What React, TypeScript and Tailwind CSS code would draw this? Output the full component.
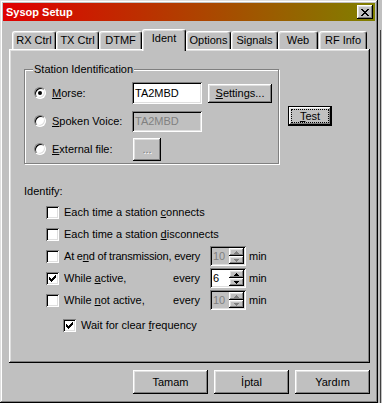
import type { ReactNode } from 'react';

const raised =
  'shadow-[inset_-1px_-1px_#000,inset_1px_1px_#fff,inset_-2px_-2px_#808080,inset_2px_2px_#dfdfdf]';
const sunken =
  'shadow-[inset_1px_1px_#808080,inset_-1px_-1px_#fff,inset_2px_2px_#000,inset_-2px_-2px_#dfdfdf]';

const tabs = [
  { label: 'RX Ctrl', w: 'w-[44px]' },
  { label: 'TX Ctrl', w: 'w-[43px]' },
  { label: 'DTMF', w: 'w-[43px]' },
  { label: 'Ident', w: 'w-[44px]', active: true },
  { label: 'Options', w: 'w-[45px]' },
  { label: 'Signals', w: 'w-[47px]' },
  { label: 'Web', w: 'w-[40px]' },
  { label: 'RF Info', w: 'w-[48px] ml-[1px]' },
];

function Btn({ children, className = '' }: { children: ReactNode; className?: string }) {
  return (
    <div className={`flex items-center justify-center bg-[#c0c0c0] ${raised} ${className}`}>{children}</div>
  );
}

function Radio({ on }: { on?: boolean }) {
  return (
    <div className="flex h-[12px] w-[12px] shrink-0 items-center justify-center rounded-full border border-t-[#808080] border-l-[#808080] border-r-white border-b-white bg-white shadow-[inset_1px_1px_#000,inset_-1px_-1px_#dfdfdf]">
      {on && <div className="h-[4px] w-[4px] rounded-full bg-black" />}
    </div>
  );
}

function Check({ on }: { on?: boolean }) {
  return (
    <div className={`flex h-[13px] w-[13px] shrink-0 items-center justify-center bg-white ${sunken}`}>
      {on && (
        <svg width="7" height="7" viewBox="0 0 7 7" shapeRendering="crispEdges">
          <rect x="6" y="0" width="1" height="1" />
          <rect x="5" y="1" width="2" height="1" />
          <rect x="0" y="2" width="1" height="1" />
          <rect x="4" y="2" width="3" height="1" />
          <rect x="0" y="3" width="2" height="1" />
          <rect x="3" y="3" width="3" height="1" />
          <rect x="0" y="4" width="5" height="1" />
          <rect x="1" y="5" width="3" height="1" />
          <rect x="2" y="6" width="1" height="1" />
        </svg>
      )}
    </div>
  );
}

function Arrow({ up, color }: { up?: boolean; color: string }) {
  return (
    <svg width="5" height="3" viewBox="0 0 5 3" shapeRendering="crispEdges" fill={color}>
      {up ? (
        <>
          <rect x="2" y="0" width="1" height="1" />
          <rect x="1" y="1" width="3" height="1" />
          <rect x="0" y="2" width="5" height="1" />
        </>
      ) : (
        <>
          <rect x="0" y="0" width="5" height="1" />
          <rect x="1" y="1" width="3" height="1" />
          <rect x="2" y="2" width="1" height="1" />
        </>
      )}
    </svg>
  );
}

function Spin({ value, disabled }: { value: string; disabled?: boolean }) {
  const c = disabled ? '#808080' : '#000';
  return (
    <div className={`ml-[10px] flex h-[20px] w-[36px] p-[2px] ${sunken} ${disabled ? 'bg-[#c0c0c0]' : 'bg-white'}`}>
      <span className={`flex-1 pl-[1px] leading-[16px] ${disabled ? 'text-[#808080]' : 'text-black'}`}>{value}</span>
      <div className="flex w-[15px] flex-col">
        <Btn className="h-[8px]"><Arrow up color={c} /></Btn>
        <Btn className="h-[8px]"><Arrow color={c} /></Btn>
      </div>
    </div>
  );
}

export default function App() {
  return (
    <div className="flex h-[403px] w-[382px] bg-[#c0c0c0] font-['Liberation_Sans',Arial,sans-serif] text-[11px] leading-[13px] text-black">
      <div className="flex h-[403px] w-[378px] flex-col p-[3px] shadow-[inset_-1px_-1px_#000,inset_1px_1px_#dfdfdf,inset_-2px_-2px_#808080,inset_2px_2px_#fff]">
        {/* title bar */}
        <div className="flex h-[18px] items-center justify-between bg-[linear-gradient(90deg,#e00000,#808000)] pl-[3px] pr-[2px]">
          <span className="font-bold text-white">Sysop Setup</span>
          <Btn className="h-[14px] w-[16px]">
            <svg width="8" height="7" viewBox="0 0 8 7" shapeRendering="crispEdges">
              <rect x="0" y="0" width="2" height="1" />
              <rect x="6" y="0" width="2" height="1" />
              <rect x="1" y="1" width="2" height="1" />
              <rect x="5" y="1" width="2" height="1" />
              <rect x="2" y="2" width="4" height="1" />
              <rect x="3" y="3" width="2" height="1" />
              <rect x="2" y="4" width="4" height="1" />
              <rect x="1" y="5" width="2" height="1" />
              <rect x="5" y="5" width="2" height="1" />
              <rect x="0" y="6" width="2" height="1" />
              <rect x="6" y="6" width="2" height="1" />
            </svg>
          </Btn>
        </div>

        {/* tabs */}
        <div className="mt-[8px] flex h-[20px] items-end pl-[9px]">
          {tabs.map((t) =>
            t.active ? (
              <div
                key={t.label}
                className={`relative z-10 -mb-[2px] flex h-[22px] justify-center rounded-t-[3px] border-t border-l border-r border-t-white border-l-white border-r-black bg-[#c0c0c0] pt-[2px] shadow-[inset_-1px_0_#808080,inset_1px_1px_#dfdfdf] ${t.w}`}
              >
                {t.label}
              </div>
            ) : (
              <div
                key={t.label}
                className={`flex h-[18px] justify-center rounded-t-[3px] border-t border-l border-r border-t-white border-l-white border-r-black pt-[2px] shadow-[inset_-1px_0_#808080,inset_1px_1px_#dfdfdf] ${t.w}`}
              >
                {t.label}
              </div>
            )
          )}
        </div>

        {/* tab page */}
        <div className="ml-[6px] h-[314px] w-[361px] pl-[15px] pt-[20px] shadow-[inset_-1px_-1px_#000,inset_1px_1px_#fff,inset_-2px_-2px_#808080,inset_2px_2px_#dfdfdf]">
          <div className="flex items-start">
            <div className="relative h-[95px] w-[255px] border border-[#808080] pl-[9px] pt-[12px] shadow-[1px_1px_0_#fff,inset_1px_1px_0_#fff]">
              <span className="absolute -top-[7px] left-[8px] bg-[#c0c0c0] px-[1px]">Station Identification</span>
              <div className="flex flex-col gap-[6px]">
                <div className="flex h-[22px] items-center">
                  <Radio on />
                  <span className="ml-[6px] w-[80px]"><span className="underline underline-offset-[1px]">M</span>orse:</span>
                  <div className={`flex h-[22px] w-[70px] items-center bg-white pl-[3px] ${sunken}`}>TA2MBD</div>
                  <Btn className="ml-[6px] h-[19px] w-[64px]">
                    <span><span className="underline underline-offset-[1px]">S</span>ettings...</span>
                  </Btn>
                </div>
                <div className="flex h-[22px] items-center">
                  <Radio />
                  <span className="ml-[6px] w-[80px]"><span className="underline underline-offset-[1px]">S</span>poken Voice:</span>
                  <div className={`flex h-[21px] w-[70px] items-center bg-[#c0c0c0] pl-[3px] text-[#808080] ${sunken}`}>TA2MBD</div>
                </div>
                <div className="flex h-[22px] items-center">
                  <Radio />
                  <span className="ml-[6px] w-[80px]"><span className="underline underline-offset-[1px]">E</span>xternal file:</span>
                  <Btn className="ml-[1px] h-[23px] w-[28px] text-[#808080] [text-shadow:1px_1px_0_#fff]">...</Btn>
                </div>
              </div>
            </div>
            <div className="ml-[9px] mt-[37px] h-[20px] w-[44px] border border-black">
              <Btn className="h-full w-full p-[2px]">
                <span className="flex h-full w-full items-center justify-center border border-dotted border-black">
                  <span><span className="underline underline-offset-[1px]">T</span>est</span>
                </span>
              </Btn>
            </div>
          </div>

          <div className="mt-[21px]">Identify:</div>

          <div className="mt-[3px] flex flex-col">
            <div className="flex h-[22px] items-center pl-[22px]">
              <Check />
              <span className="ml-[5px]">Each time a station <span className="underline underline-offset-[1px]">c</span>onnects</span>
            </div>
            <div className="flex h-[22px] items-center pl-[22px]">
              <Check />
              <span className="ml-[5px]">Each time a station <span className="underline underline-offset-[1px]">d</span>isconnects</span>
            </div>
            <div className="flex h-[22px] items-center pl-[22px]">
              <Check />
              <span className="ml-[5px] w-[136px] whitespace-nowrap tracking-[-0.2px]">At e<span className="underline underline-offset-[1px]">n</span>d of transmission, every</span>
              <Spin value="10" disabled />
              <span className="ml-[3px]">min</span>
            </div>
            <div className="flex h-[22px] items-center pl-[22px]">
              <Check on />
              <span className="ml-[5px] flex w-[136px] justify-between">
                <span>While <span className="underline underline-offset-[1px]">a</span>ctive,</span>
                <span>every</span>
              </span>
              <Spin value="6" />
              <span className="ml-[3px]">min</span>
            </div>
            <div className="flex h-[22px] items-center pl-[22px]">
              <Check />
              <span className="ml-[5px] flex w-[136px] justify-between">
                <span>While <span className="underline underline-offset-[1px]">n</span>ot active,</span>
                <span>every</span>
              </span>
              <Spin value="10" disabled />
              <span className="ml-[3px]">min</span>
            </div>
            <div className="mt-[3px] flex h-[22px] items-center pl-[39px]">
              <Check on />
              <span className="ml-[5px]">Wait for clear <span className="underline underline-offset-[1px]">f</span>requency</span>
            </div>
          </div>
        </div>

        {/* dialog buttons */}
        <div className="ml-[6px] mt-[7px] flex w-[361px] justify-end gap-[6px]">
          <Btn className="h-[24px] w-[75px]">Tamam</Btn>
          <Btn className="h-[24px] w-[75px]">İptal</Btn>
          <Btn className="h-[24px] w-[75px]">Yardım</Btn>
        </div>
      </div>
      <div className="flex-1 pt-[30px]">
        <div className="ml-[2px] h-full w-px bg-[#404040]" />
      </div>
    </div>
  );
}
